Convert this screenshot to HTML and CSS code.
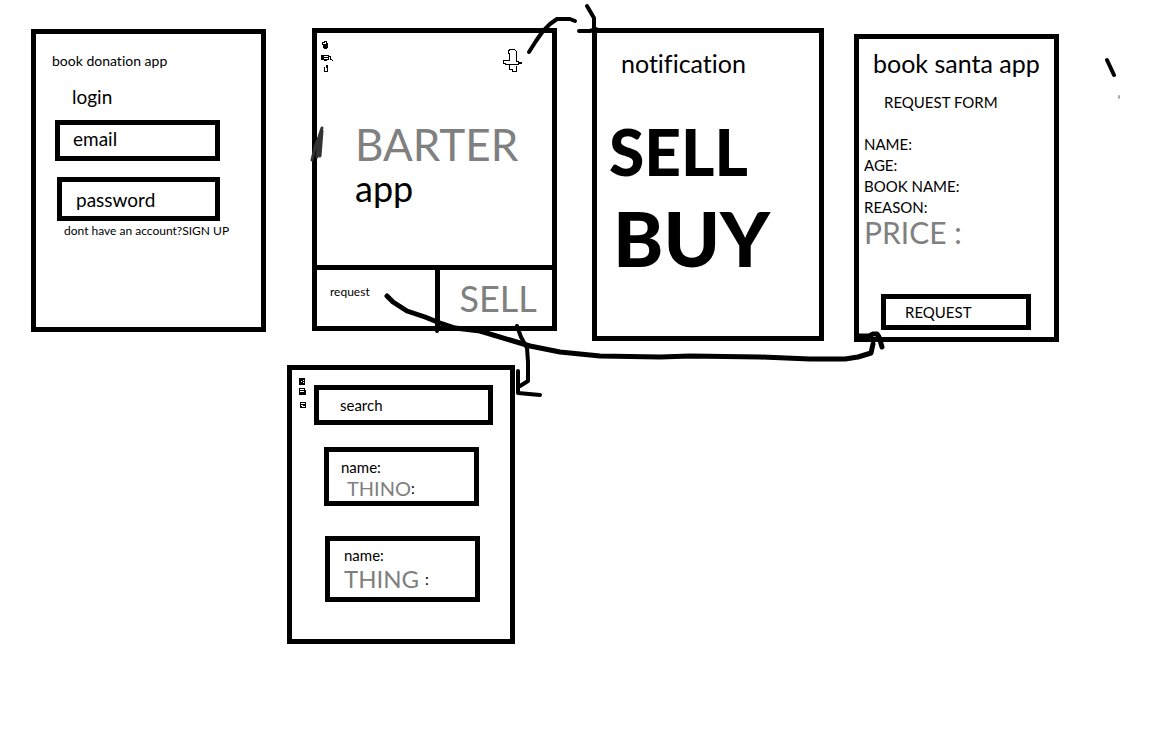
FILE: index.html
```html
<!DOCTYPE html>
<html lang="en">
<head>
<meta charset="utf-8">
<title>Barter app wireframes</title>
<link rel="stylesheet" href="styles.css">
</head>
<body>
<main class="board">
  <div class="row row-top">
    <form class="screen login">
      <h1 class="login-title">book donation app</h1>
      <h2 class="login-heading">login</h2>
      <input class="box email" type="email" placeholder="email" aria-label="email">
      <input class="box password" type="password" placeholder="password" aria-label="password">
      <p class="signup">dont have an account?<a href="#">SIGN UP</a></p>
    </form>

    <section class="screen home">
      <header class="home-bar">
        <button class="icon-button" type="button" aria-label="menu">
          <svg width="16" height="34" viewBox="320 38 16 34" shape-rendering="crispEdges">
            <path class="fine" d="M322.500 41.500l4-1 1 4-4 2zM322 54.500h6v4h-6zM328 55.500h2l1 3 2 1M325.500 65.500h2v5h-3v-4"/>
            <path d="M323 43h5v4h-1v1h-3v-1h-1zM321 54h3v5h-3zM324 56h4v1h-4zM323 58h4v2h-3zM326 64h2v3h-2zM324 66h1v4h-1z"/>
          </svg>
        </button>
        <button class="icon-button" type="button" aria-label="add">
          <svg width="20" height="24" viewBox="503 49 20 24" shape-rendering="crispEdges">
            <path class="fine" d="M509.500 60.500v-7h-1v-3l2-1h4l2 2v10h2v1h3v1h-3v1h-13v-1h-2v-3h6M509.500 64.500v5h3v2h4v-6"/>
          </svg>
        </button>
      </header>
      <h1 class="home-title"><span class="pencil pencil-xl">BARTER</span><span class="home-app">app</span></h1>
      <nav class="tabs">
        <button class="tab" type="button">request</button>
        <button class="tab tab-sell pencil" type="button">SELL</button>
      </nav>
    </section>

    <section class="screen notice">
      <h1 class="title">notification</h1>
      <button class="marker marker-sell" type="button">SELL</button>
      <button class="marker marker-buy" type="button">BUY</button>
    </section>

    <form class="screen request">
      <h1 class="title">book santa app</h1>
      <h2 class="request-heading">REQUEST FORM</h2>
      <div class="field"><label for="name">NAME:</label><input id="name" type="text"></div>
      <div class="field"><label for="age">AGE:</label><input id="age" type="text"></div>
      <div class="field"><label for="book">BOOK NAME:</label><input id="book" type="text"></div>
      <div class="field"><label for="reason">REASON:</label><input id="reason" type="text"></div>
      <div class="field field-price"><label class="pencil" for="price">PRICE :</label><input id="price" type="text"></div>
      <button class="box submit" type="button">REQUEST</button>
    </form>
  </div>

  <div class="row row-bottom">
    <section class="screen search">
      <button class="icon-button menu" type="button" aria-label="menu">
        <svg width="8" height="32" viewBox="299 377 8 32" shape-rendering="crispEdges">
          <path d="M299 378h6v7h-6zM299 388h6v2h1v5h-7zM300 402h6v6h-6z"/>
          <path class="paper" d="M301 381h1v1h-1zM303 380h1v1h-1zM303 382h1v1h-1zM300 389h4v1h-4zM300 391h4v1h-4zM301 403h4v1h-4zM301 405h2v1h-2zM302 406h3v1h-3z"/>
        </svg>
      </button>
      <div class="results">
        <input class="box search-box" type="search" placeholder="search" aria-label="search">
        <article class="box card">
          <p>name:</p>
          <p class="thing"><span class="pencil pencil-s">THINO</span>:</p>
        </article>
        <article class="box card card-tall">
          <p>name:</p>
          <p class="thing"><span class="pencil pencil-m">THING</span>:</p>
        </article>
      </div>
    </section>
  </div>

  <svg class="arrows" viewBox="0 0 1152 754" preserveAspectRatio="none" aria-hidden="true">
    <path d="M529 52L536 41 543 31 550 24 557 19H570L575 21M587 6L594 18V31M579 31H590L596 29"/>
    <path class="heavy" d="M387 296L393 302 407 311 425 317 440 323 455 328 480 331 510 340 530 346 560 352 600 356 660 357 690 356 760 357 810 359 845 359 858 357 871 353 873 344M859 336H869L873 334H877L879 337 882 347"/>
    <path d="M517 326L521 337 527 348 528 362V381L520 386M518 371V393L540 395M437 325V331M1107 60L1114 75"/>
    <path class="smudge" d="M322 128L319 137 315 147 312 160M322 131L320 156M319 138L317 157"/>
    <path class="speck" d="M1119 96v2"/>
  </svg>
</main>
</body>
</html>
```

FILE: styles.css
```css
* { box-sizing: border-box; }

body {
  margin: 0;
  background: #fff;
  color: #000;
  font-family: Lato, "Liberation Sans", sans-serif;
  font-size: 15px;
  line-height: 20px;
  font-variant-ligatures: none;
}

h1, h2, p { margin: 0; font-weight: 400; }
a { color: inherit; text-decoration: none; }

input, button {
  margin: 0;
  padding: 0;
  border: 0;
  background: none;
  color: inherit;
  font: inherit;
  font-variant-ligatures: none;
  text-align: left;
}
input::placeholder { color: #000; opacity: 1; }

.board {
  position: relative;
  min-height: 100vh;
  padding-top: 28px;
}

.row { display: grid; align-items: start; }
.row-top {
  grid-template-columns: 31fr 235fr 46fr 245fr 35fr 232fr 30fr 205fr 93fr;
}
.row-bottom {
  grid-template-columns: 287fr 228fr 637fr;
  margin-top: 23px;
}

.screen {
  display: flex;
  flex-direction: column;
  min-width: 0;
  border: 5px solid #000;
}
.box { border: 5px solid #000; }
.icon-button { line-height: 0; }

.pencil { color: #808080; }
.title { font-size: 25px; line-height: 32px; white-space: nowrap; }

/* login */
.login {
  grid-column: 2;
  min-height: 303px;
  margin-top: 1px;
  padding: 17px 0 0 16px;
}
.login-title { font-size: 14px; }
.login-heading {
  margin: 14px 0 11px 20px;
  font-size: 19px;
  line-height: 24px;
}
.login .box { font-size: 19px; }
.login .email {
  width: 79%;
  height: 41px;
  margin-left: 3px;
  padding: 0 0 4px 13px;
}
.login .password {
  width: 78%;
  height: 44px;
  margin: 16px 0 0 5px;
  padding-left: 14px;
}
.signup {
  margin: 2px 0 0 12px;
  font-size: 12px;
  line-height: 16px;
  white-space: nowrap;
}

/* home */
.home { grid-column: 4; min-height: 303px; }
.home-bar {
  display: flex;
  justify-content: space-between;
  padding: 5px 29px 0 3px;
}
.home-bar .icon-button:last-child { padding-top: 11px; }
.home-title { flex: 1; padding: 45px 0 0 38px; }
.home-title span { display: block; }
.pencil-xl { font-size: 44px; line-height: 52px; }
.home-app { font-size: 36px; line-height: 36px; }
.tabs {
  display: grid;
  grid-template-columns: 1fr 1fr;
  border-top: 5px solid #000;
}
.tab {
  height: 56px;
  padding: 0 0 12px 13px;
  font-size: 12px;
}
.tab-sell {
  padding: 0 0 0 20px;
  border-left: 5px solid #000;
  font-size: 36px;
}

/* notification */
.notice {
  grid-column: 6;
  min-height: 313px;
  padding: 14px 0 0 12px;
}
.notice .title { padding-left: 12px; }
.marker { font-weight: 900; }
.marker-sell { margin-top: 35px; font-size: 64px; line-height: 76px; }
.marker-buy { padding-left: 4px; font-size: 76px; line-height: 96px; }

/* request form */
.request {
  grid-column: 8;
  min-height: 308px;
  margin-top: 6px;
  padding: 8px 0 7px 5px;
}
.request .title { padding: 0 0 13px 9px; }
.request-heading {
  padding: 0 0 22px 20px;
  font-size: 15px;
}
.field { display: flex; line-height: 21px; }
.field input { flex: 1; min-width: 0; }
.field-price { font-size: 30px; line-height: 28px; }
.submit {
  width: 79%;
  height: 36px;
  margin: auto 0 0 17px;
  padding-left: 19px;
}

/* search */
.search {
  grid-column: 2;
  flex-direction: row;
  align-items: flex-start;
  min-height: 279px;
}
.menu { padding: 7px 0 0 7px; }
.results {
  display: flex;
  flex: 1;
  flex-direction: column;
  min-width: 0;
  padding: 15px 17px 0 7px;
}
.search-box { width: 100%; height: 40px; padding-left: 21px; }
.card {
  height: 59px;
  margin: 22px 14px 0 10px;
  padding: 5px 0 0 12px;
}
.card-tall { height: 66px; margin: 30px 13px 0 11px; padding: 4px 0 0 14px; }
.thing { display: flex; align-items: center; padding-left: 6px; line-height: 22px; }
.card-tall .thing { gap: 6px; padding-left: 0; line-height: 28px; }
.pencil-s { font-size: 20px; }
.pencil-m { font-size: 24px; }

/* connectors over the screens */
.arrows {
  position: absolute;
  top: 0;
  left: 0;
  width: 100%;
  height: 754px;
  fill: none;
  stroke: #000;
  stroke-width: 4px;
  stroke-linecap: round;
  stroke-linejoin: round;
  pointer-events: none;
}
.arrows .heavy { stroke-width: 5px; }
.arrows .smudge { stroke: #333; stroke-width: 3px; }
.arrows .speck { stroke: #aaa; stroke-width: 2px; }
.fine { fill: none; stroke: #000; }
.paper { fill: #fff; }
```
